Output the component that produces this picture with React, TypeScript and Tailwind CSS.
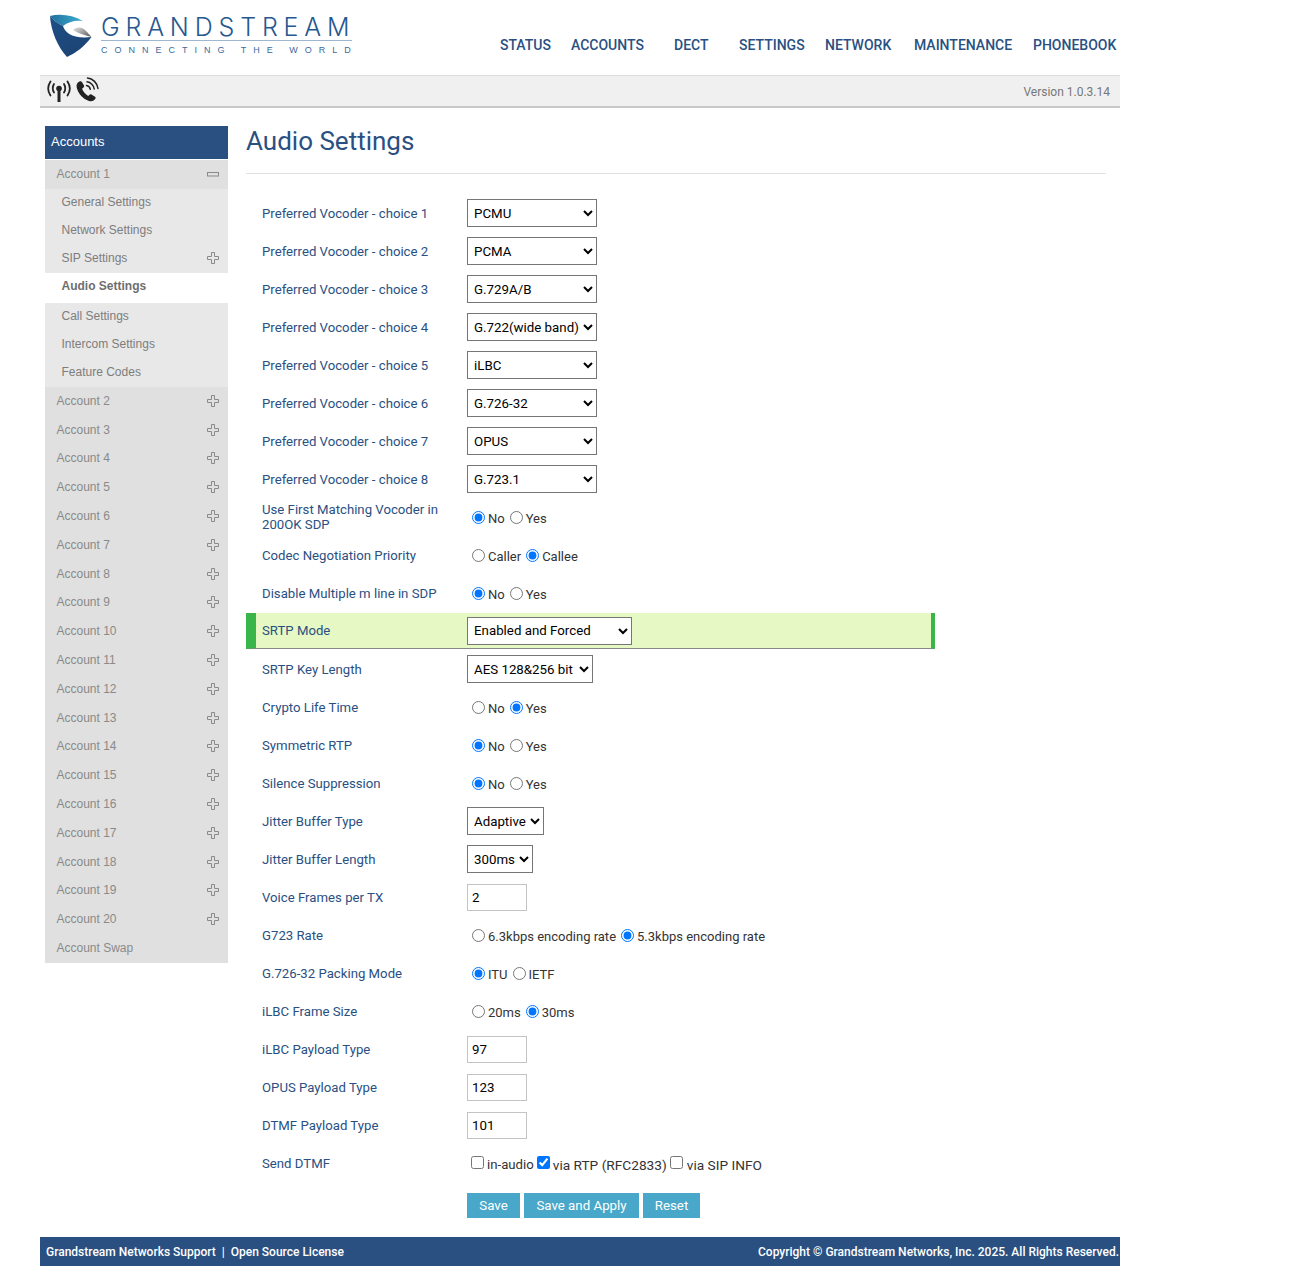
import { useState } from "react";

type Row =
  | { kind: "select"; label: string; value: string; options?: string[]; width: string }
  | { kind: "radio"; label: string; options: string[]; checked: number }
  | { kind: "input"; label: string; value: string }
  | { kind: "dtmf"; label: string };

const vocoders = ["PCMU", "PCMA", "G.729A/B", "G.722(wide band)", "iLBC", "G.726-32", "OPUS", "G.723.1"];

const rowsBefore: Row[] = [
  ...vocoders.map((value, i): Row => ({
    kind: "select",
    label: `Preferred Vocoder - choice ${i + 1}`,
    value,
    options: vocoders,
    width: "w-[130px]",
  })),
  { kind: "radio", label: "Use First Matching Vocoder in 200OK SDP", options: ["No", "Yes"], checked: 0 },
  { kind: "radio", label: "Codec Negotiation Priority", options: ["Caller", "Callee"], checked: 1 },
  { kind: "radio", label: "Disable Multiple m line in SDP", options: ["No", "Yes"], checked: 0 },
];

const rowsAfter: Row[] = [
  { kind: "select", label: "SRTP Key Length", value: "AES 128&256 bit", width: "w-[126px]" },
  { kind: "radio", label: "Crypto Life Time", options: ["No", "Yes"], checked: 1 },
  { kind: "radio", label: "Symmetric RTP", options: ["No", "Yes"], checked: 0 },
  { kind: "radio", label: "Silence Suppression", options: ["No", "Yes"], checked: 0 },
  { kind: "select", label: "Jitter Buffer Type", value: "Adaptive", width: "w-[77px]" },
  { kind: "select", label: "Jitter Buffer Length", value: "300ms", width: "w-[66px]" },
  { kind: "input", label: "Voice Frames per TX", value: "2" },
  { kind: "radio", label: "G723 Rate", options: ["6.3kbps encoding rate", "5.3kbps encoding rate"], checked: 1 },
  { kind: "radio", label: "G.726-32 Packing Mode", options: ["ITU", "IETF"], checked: 0 },
  { kind: "radio", label: "iLBC Frame Size", options: ["20ms", "30ms"], checked: 1 },
  { kind: "input", label: "iLBC Payload Type", value: "97" },
  { kind: "input", label: "OPUS Payload Type", value: "123" },
  { kind: "input", label: "DTMF Payload Type", value: "101" },
  { kind: "dtmf", label: "Send DTMF" },
];

const navItems = [
  { label: "STATUS", cls: "w-[71px]" },
  { label: "ACCOUNTS", cls: "w-[103px]" },
  { label: "DECT", cls: "w-[65px]" },
  { label: "SETTINGS", cls: "w-[86px]" },
  { label: "NETWORK", cls: "w-[89px]" },
  { label: "MAINTENANCE", cls: "w-[119px]" },
  { label: "PHONEBOOK", cls: "w-[87px]" },
];

const subItems = ["General Settings", "Network Settings", "SIP Settings"];
const subItemsAfter = ["Call Settings", "Intercom Settings", "Feature Codes"];
const accounts = Array.from({ length: 19 }, (_, i) => `Account ${i + 2}`);

function PlusIcon() {
  return (
    <svg width="12" height="12" viewBox="0 0 12 12" fill="none" stroke="#8a8a8a" strokeWidth="1" className="mr-[9px]">
      <path d="M4.500 .5h3v4h4v3h-4v4h-3v-4h-4v-3h4z" />
    </svg>
  );
}

function MinusIcon() {
  return (
    <svg width="12" height="5" viewBox="0 0 12 5" fill="none" stroke="#8a8a8a" strokeWidth="1" className="mr-[9px]">
      <rect x=".5" y=".5" width="11" height="3.500" />
    </svg>
  );
}

function Logo() {
  return (
    <div className="flex items-start">
      <svg width="44" height="44" viewBox="0 0 44 44" className="mt-[14px] ml-[9px]">
        <defs>
          <linearGradient id="swoosh" x1="0" y1="0" x2="1" y2="0">
            <stop offset="0" stopColor="#1f6f9f" />
            <stop offset="1" stopColor="#3fb0cf" />
          </linearGradient>
          <linearGradient id="body" x1="0" y1="0" x2="0.6" y2="1">
            <stop offset="0" stopColor="#1d4f86" />
            <stop offset="1" stopColor="#1c4474" />
          </linearGradient>
          <linearGradient id="gray" x1="0" y1="0" x2="1" y2="0.6">
            <stop offset="0" stopColor="#e4e4e4" />
            <stop offset="1" stopColor="#6f6f6f" />
          </linearGradient>
        </defs>
        <path d="M1 2C11 -.5 24 1 34 7C26 6 19 8 14 12C8 9 4 6 1 2Z" fill="url(#swoosh)" />
        <path d="M1 2C4 6 8 9 14 12C16 19 24 25 42.500 23C36 32 27 39 18 43C9 33 2 18 1 2Z" fill="url(#body)" />
        <path d="M24 16C28 12.500 33 13 36 16C39 19 41 21 42.500 23C36 21 30 20 24 16Z" fill="url(#gray)" />
      </svg>
      <div className="ml-[8px] mt-[14px] w-[251px]">
        <div className="h-[26px] text-[25px] leading-[26px] tracking-[5.85px] text-[#26588f] font-['Inter',sans-serif] whitespace-nowrap font-light">
          GRANDSTREAM
        </div>
        <div className="h-px bg-[#9fb6cf]" />
        <div className="mt-[3px] text-[9px] leading-[12px] tracking-[7px] text-[#3e6a9a] font-['Liberation_Sans',sans-serif] whitespace-nowrap">
          CONNECTING THE WORLD
        </div>
      </div>
    </div>
  );
}

function StatusIcons() {
  return (
    <div className="flex items-center ml-[6px] gap-[3px]">
      <svg width="26" height="24" viewBox="0 0 26 24" fill="none" stroke="#222" strokeWidth="1.800" strokeLinecap="round">
        <circle cx="13" cy="9.500" r="2.800" fill="#222" stroke="none" />
        <path d="M13 10V23" strokeWidth="3" strokeLinecap="butt" />
        <path d="M8 5C6.500 7.500 6.500 11 8 13.500M18 5C19.500 7.500 19.500 11 18 13.500" />
        <path d="M4.500 2.500C1.500 7 1.500 12 4.500 16.500M21.500 2.500C24.500 7 24.500 12 21.500 16.500" />
      </svg>
      <svg width="25" height="25" viewBox="0 0 25 25" fill="none" stroke="#222" strokeWidth="1.500" strokeLinecap="round" className="-mt-[4px]">
        <path
          d="M4.500 4.500C2 5.500 1 8 1.800 11C3.500 17 8 22 14 24C17 24.800 19.500 23.500 20.500 21.500C20.800 20.800 20.500 20 20 19.700L16.500 17.500C15.800 17 15 17.200 14.500 17.800L13.200 19C10.500 17.500 8 14.500 7 11.800L8.500 10.500C9.200 10 9.300 9.200 9 8.500L6.800 4.800C6.300 4.200 5.300 4.100 4.500 4.500Z"
          fill="#222"
          stroke="none"
        />
        <path d="M11.500 8.500C13.500 8.800 15 10.300 15.300 12.300" />
        <path d="M12 4.800C15.800 5.200 18.800 8.300 19.200 12" />
        <path d="M12.500 1C17.800 1.500 22.400 6 23 11.500" />
      </svg>
    </div>
  );
}

function Sidebar() {
  return (
    <aside className="w-[183px] ml-[5px] mt-[18px] font-['Liberation_Sans',sans-serif] text-[12px] shrink-0">
      <div className="h-[33px] pb-[2px] bg-[#2a5082] text-white text-[13px] flex items-center pl-[6px]">Accounts</div>
      <div className="h-[29px] pb-px mt-px bg-[#e0e0e0] text-[#8a8a8a] flex items-center justify-between pl-[11.5px]">
        <span>Account 1</span>
        <MinusIcon />
      </div>
      <div className="bg-[#e8e8e8] text-[#7d7d7d]">
        {subItems.map((item) => (
          <div key={item} className="h-[28px] pb-[2px] flex items-center justify-between pl-[16.5px]">
            <span>{item}</span>
            {item === "SIP Settings" && <PlusIcon />}
          </div>
        ))}
        <div className="h-[30px] pb-[4px] bg-white flex items-center pl-[16.5px] font-bold text-[#6e6e6e]">Audio Settings</div>
        {subItemsAfter.map((item) => (
          <div key={item} className="h-[28px] pb-[2px] flex items-center pl-[16.5px]">
            {item}
          </div>
        ))}
      </div>
      <div className="bg-[#e0e0e0] text-[#8a8a8a]">
        {accounts.map((name) => (
          <div key={name} className="h-[28.8px] pb-px flex items-center justify-between pl-[11.5px]">
            <span>{name}</span>
            <PlusIcon />
          </div>
        ))}
        <div className="h-[29px] pb-px flex items-center pl-[11.5px]">Account Swap</div>
      </div>
    </aside>
  );
}

function Control({ row, name }: { row: Row; name: string }) {
  if (row.kind === "select") {
    const options = row.options ?? [row.value];
    return (
      <select
        defaultValue={row.value}
        className={`${row.width} h-[28px] border border-[#767676] bg-white pl-[2px] text-[13.3px] text-black`}
      >
        {options.map((o) => (
          <option key={o}>{o}</option>
        ))}
      </select>
    );
  }
  if (row.kind === "input") {
    return (
      <input
        defaultValue={row.value}
        className="w-[60px] h-[27px] border border-[#c4c4c4] bg-white pl-[4px] text-[13.3px] text-black"
      />
    );
  }
  if (row.kind === "radio") {
    return (
      <div className="flex items-center text-[13px] text-[#333] pl-[5px]">
        {row.options.map((opt, i) => (
          <label key={opt} className="flex items-center mr-[5px]">
            <input type="radio" name={name} defaultChecked={i === row.checked} className="m-0 w-[13px] h-[13px] mr-[3px]" />
            <span className="mt-[4px]">{opt}</span>
          </label>
        ))}
      </div>
    );
  }
  return (
    <div className="flex items-center text-[13.7px] text-[#333] pl-[4px]">
      <label className="flex items-center mr-[3px]">
        <input type="checkbox" className="m-0 w-[13px] h-[13px] mr-[3px]" />
        <span className="mt-[4px] text-[13.2px]">in-audio</span>
      </label>
      <label className="flex items-center mr-[3px]">
        <input type="checkbox" defaultChecked className="m-0 w-[13px] h-[13px] mr-[3px]" />
        <span className="mt-[4px]">via RTP (RFC2833)</span>
      </label>
      <label className="flex items-center">
        <input type="checkbox" className="m-0 w-[13px] h-[13px] mr-[4px]" />
        <span className="mt-[4px]">via SIP INFO</span>
      </label>
    </div>
  );
}

function FormRow({ row }: { row: Row }) {
  return (
    <div className="h-[38px] flex items-center">
      <div className="w-[221px] pl-[16px] pr-[24px] text-[13.2px] leading-[15px] text-[#2a5082]">{row.label}</div>
      <Control row={row} name={row.label} />
    </div>
  );
}

export default function App() {
  const [srtp, setSrtp] = useState("Enabled and Forced");

  return (
    <div className="w-[1300px] h-[1266px] bg-white font-['Roboto',sans-serif] overflow-hidden">
      <div className="w-[1080px] ml-[40px]">
        {/* Header */}
        <header className="h-[75px] flex justify-between">
          <Logo />
          <nav className="flex items-center mt-[15px] text-[14px] font-medium text-[#2a5082] whitespace-nowrap">
            {navItems.map((item) => (
              <span key={item.label} className={item.cls}>
                {item.label}
              </span>
            ))}
          </nav>
        </header>

        {/* Status bar */}
        <div className="h-[33px] bg-[#f0f0f0] border-t border-[#dddddd] border-b-2 border-b-[#c8c8c8] flex items-center justify-between">
          <StatusIcons />
          <span className="text-[12px] text-[#777] mr-[10px] mt-[2px]">Version 1.0.3.14</span>
        </div>

        <div className="flex h-[1129px]">
          <Sidebar />

          <main className="ml-[18px] w-[860px]">
            <h1 className="mt-[19px] h-[29px] text-[26px] leading-[29px] text-[#2a5082]">Audio Settings</h1>
            <div className="mt-[17px] h-px bg-[#e0e0e0]" />

            <div className="mt-[20px] w-[689px]">
              {rowsBefore.map((row) => (
                <FormRow key={row.label} row={row} />
              ))}

              {/* Highlighted row */}
              <div className="h-[36px] my-px flex items-center bg-[#e6f8c3] border-b border-[#888] border-l-[10px] border-l-[#39b54a] border-r-4 border-r-[#39b54a]">
                <div className="w-[211px] pl-[6px] pt-px text-[13.2px] text-[#2a5082]">SRTP Mode</div>
                <select
                  value={srtp}
                  onChange={(e) => setSrtp(e.target.value)}
                  className="w-[165px] h-[28px] border border-[#767676] bg-white pl-[2px] text-[13.3px] text-black"
                >
                  <option>Enabled and Forced</option>
                  <option>Enabled but Not Forced</option>
                  <option>Disabled</option>
                </select>
              </div>

              {rowsAfter.map((row) => (
                <FormRow key={row.label} row={row} />
              ))}
            </div>

            <div className="flex gap-[4px] mt-[11px] ml-[221px] text-[13.3px] text-white">
              <button className="w-[53px] h-[25px] bg-[#49a7c9]">Save</button>
              <button className="w-[115px] h-[25px] bg-[#49a7c9]">Save and Apply</button>
              <button className="w-[57px] h-[25px] bg-[#49a7c9]">Reset</button>
            </div>
          </main>
        </div>

        {/* Footer */}
        <footer className="h-[29px] bg-[#2a5082] text-white text-[12px] font-medium flex items-center justify-between pl-[6px] pr-px">
          <span>Grandstream Networks Support&nbsp; |&nbsp; Open Source License</span>
          <span>Copyright © Grandstream Networks, Inc. 2025. All Rights Reserved.</span>
        </footer>
      </div>
    </div>
  );
}
